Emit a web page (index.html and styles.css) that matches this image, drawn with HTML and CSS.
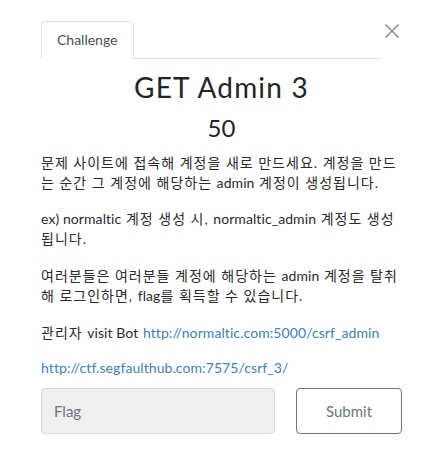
FILE: index.html
```html
<!DOCTYPE html>
<html lang="ko">
<head>
<meta charset="utf-8">
<title>Challenge</title>
<link rel="stylesheet" href="styles.css">
</head>
<body>
<div class="modal-body">
  <div class="header">
    <ul class="nav">
      <li class="tab">Challenge</li>
    </ul>
    <button class="close" aria-label="Close">
      <svg width="14" height="14" viewBox="0 0 14 14"><path d="M0.5 0.5 L13.5 13.5 M13.5 0.5 L0.5 13.5" stroke="#8a8a8a" stroke-width="1.5" fill="none"/></svg>
    </button>
  </div>
  <h3 class="name">GET Admin 3</h3>
  <h4 class="value">50</h4>
  <div class="desc">
    <p class="p1">문제 사이트에 접속해 계정을 새로 만드세요. 계정을 만드<br>는 순간 그 계정에 해당하는 <span class="en">admin</span> 계정이 생성됩니다.</p>
    <p class="p2"><span class="en">ex) normaltic</span> 계정 생성 시, <span class="en">normaltic_admin</span> 계정도 생성<br>됩니다.</p>
    <p class="p3">여러분들은 여러분들 계정에 해당하는 <span class="en">admin</span> 계정을 탈취<br>해 로그인하면, <span class="en">flag</span>를 획득할 수 있습니다.</p>
    <p class="p4">관리자 <span class="en">visit Bot</span> <a class="en" href="#">http://normaltic.com:5000/csrf_admin</a></p>
    <p class="p5"><a class="en" href="#">http://ctf.segfaulthub.com:7575/csrf_3/</a></p>
  </div>
  <form class="submit-row">
    <input class="flag" type="text" placeholder="Flag">
    <button class="submit" type="button">Submit</button>
  </form>
</div>
</body>
</html>
```

FILE: styles.css
```css
html, body {
  margin: 0;
  padding: 0;
  background: #ffffff;
}
body {
  font-family: "Lato", "Noto Sans CJK KR", sans-serif;
  color: #212529;
  font-size: 14px;
  line-height: 20px;
}
.modal-body {
  padding: 21px 44px 0 41px;
}
.header {
  display: flex;
  align-items: flex-start;
}
.nav {
  flex: 1;
  display: flex;
  list-style: none;
  margin: 0;
  padding: 0;
  border-bottom: 1px solid #dee2e6;
}
.tab {
  margin-bottom: -1px;
  border: 1px solid #dee2e6;
  border-bottom-color: #ffffff;
  border-radius: 4px 4px 0 0;
  padding: 8px 15px;
  font-size: 14px;
  line-height: 20px;
  color: #495057;
  background: #ffffff;
}
.close {
  width: 21px;
  height: 20px;
  padding: 3px 0 0 0;
  margin: 0;
  border: 0;
  background: transparent;
  display: flex;
  justify-content: center;
  align-items: flex-start;
}
.name {
  margin: 12px 0 0;
  font-size: 28px;
  line-height: 1.2;
  font-weight: 400;
  text-align: center;
  color: #212529;
  letter-spacing: 1.2px;
}
.value {
  margin: 9px 0 0;
  font-size: 24px;
  line-height: 1.2;
  font-weight: 400;
  text-align: center;
  color: #212529;
}
.desc {
  margin-top: 11px;
  color: #2a2a2a;
  white-space: nowrap;
  letter-spacing: 1px;
}
.desc .en {
  letter-spacing: 0.08px;
}
.desc p {
  margin: 0;
}
.desc .p1 { margin-bottom: 16px; }
.desc .p2 { margin-bottom: 17px; }
.desc .p3 { margin-bottom: 17px; }
.desc .p4 { margin-bottom: 15px; }
.desc .p5 { margin-bottom: 10px; }
.desc a {
  color: #3a80c3;
  text-decoration: none;
}
.submit-row {
  display: grid;
  grid-template-columns: 1fr 106px;
  column-gap: 21px;
  margin: 0;
}
.flag {
  box-sizing: border-box;
  height: 46px;
  width: 100%;
  background: #efefef;
  border: 1px solid #d3d8de;
  border-radius: 4px;
  padding: 0 12px;
  font-family: "Lato", sans-serif;
  font-size: 15px;
  color: #495057;
  outline: none;
}
.flag::placeholder {
  color: #6c757d;
}
.submit {
  box-sizing: border-box;
  height: 46px;
  background: #ffffff;
  border: 1px solid #6c757d;
  border-radius: 4px;
  font-family: "Lato", sans-serif;
  font-size: 15px;
  color: #6c757d;
}
```
